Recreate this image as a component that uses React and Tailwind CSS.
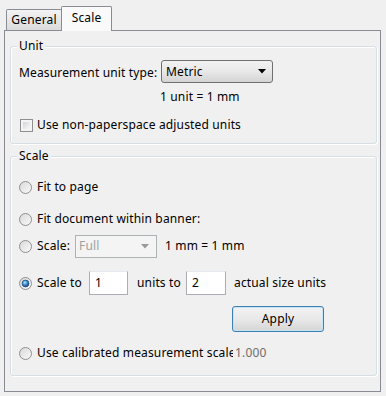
import React from 'react';

function Radio({ checked }) {
  return (
    <svg width="13" height="13" viewBox="0 0 13 13" className="shrink-0">
      <defs>
        <linearGradient id="rg" x1="0" y1="0" x2="1" y2="1">
          <stop offset="0" stopColor="#d8d8d8" />
          <stop offset="1" stopColor="#fbfbfb" />
        </linearGradient>
        <radialGradient id="rd" cx="0.4" cy="0.35" r="0.7">
          <stop offset="0" stopColor="#b9e4fb" />
          <stop offset="0.5" stopColor="#3a8fd0" />
          <stop offset="1" stopColor="#0d3a6b" />
        </radialGradient>
      </defs>
      <circle cx="6.5" cy="6.5" r="6" fill="url(#rg)" stroke="#8f8f8f" strokeWidth="1" />
      {checked && <circle cx="6.5" cy="6.5" r="3.4" fill="url(#rd)" stroke="#1d4f7f" strokeWidth="0.8" />}
    </svg>
  );
}

function Checkbox() {
  return (
    <div className="w-[13px] h-[13px] shrink-0 border border-[#8f8f8f] bg-[#f4f4f4] p-[2px]">
      <div className="w-full h-full bg-gradient-to-br from-[#d3d6da] to-[#f8f8f8]" />
    </div>
  );
}

function Arrow({ color }) {
  return (
    <svg width="8" height="5" viewBox="0 0 8 5">
      <path d="M0 0 L8 0 L4 4.5 Z" fill={color} />
    </svg>
  );
}

export default function App() {
  return (
    <div className="w-[386px] h-[396px] bg-[#f0f0f0] overflow-hidden text-[12px] leading-[16px] tracking-[0.15px] text-black font-['Noto_Sans',sans-serif]">
      <div className="h-[30px] flex items-end pl-[6px]">
        <div className="w-[56px] h-[21px] flex items-center justify-center border border-b-0 border-[#898c95] rounded-t-[2px] bg-gradient-to-b from-[#f3f3f3] to-[#dbdbdb]">
          General
        </div>
        <div className="relative z-10 ml-[-1px] mb-[-1px] w-[51px] h-[25px] flex items-start justify-center pt-[3px] border border-b-0 border-[#898c95] rounded-t-[2px] bg-[#fafafa]">
          Scale
        </div>
      </div>

      <div className="ml-[4px] w-[377px] h-[362px] border border-[#898c95] bg-[#f0f0f0] pl-[5px] pt-[15px]">
        {/* Unit group */}
        <div className="relative w-[367px] h-[98px] rounded-[3px] border border-[#d5dfe5] shadow-[inset_1px_1px_0_#fff,1px_1px_0_#fff]">
          <span className="absolute left-[6px] top-[-9px] px-[2px] bg-[#f0f0f0]">Unit</span>
          <div className="mt-[13px] flex items-center h-[23px] pl-[8px]">
            <span className="w-[142px] pt-[3px]">Measurement unit type:</span>
            <div className="w-[112px] h-[23px] flex items-center justify-between pl-[4px] pr-[6px] rounded-[3px] border border-[#707070] bg-gradient-to-b from-[#f2f2f2] via-[#e8e8e8] to-[#d4d4d4]">
              <span>Metric</span>
              <Arrow color="#000" />
            </div>
          </div>
          <div className="mt-[6px] pl-[149px] h-[16px]">1 unit = 1 mm</div>
          <div className="mt-[12px] flex items-center gap-[4px] h-[16px] pl-[9px]">
            <Checkbox />
            <span>Use non-paperspace adjusted units</span>
          </div>
        </div>

        {/* Scale group */}
        <div className="relative mt-[12px] w-[367px] h-[220px] rounded-[3px] border border-[#d5dfe5] shadow-[inset_1px_1px_0_#fff,1px_1px_0_#fff]">
          <span className="absolute left-[6px] top-[-9px] px-[2px] bg-[#f0f0f0]">Scale</span>

          <div className="mt-[22px] flex items-center gap-[5px] h-[16px] pl-[8px]">
            <Radio />
            <span>Fit to page</span>
          </div>
          <div className="mt-[16px] flex items-center gap-[5px] h-[16px] pl-[8px]">
            <Radio />
            <span>Fit document within banner:</span>
          </div>
          <div className="mt-[7px] flex items-center h-[24px] pl-[8px]">
            <Radio />
            <span className="ml-[5px] w-[38px]">Scale:</span>
            <div className="w-[82px] h-[23px] flex items-center justify-between pl-[3px] pr-[7px] border border-[#adb2b5] bg-[#f4f4f4] text-[#a0a0a0]">
              <span>Full</span>
              <Arrow color="#9a9a9a" />
            </div>
            <span className="ml-[8px]">1 mm = 1 mm</span>
          </div>
          <div className="mt-[13px] flex items-center h-[24px] pl-[8px]">
            <Radio checked />
            <span className="ml-[5px] w-[52px]">Scale to</span>
            <div className="w-[39px] h-[24px] flex items-center pl-[5px] bg-white border border-[#abadb3] border-t-[#e3e9ef]">1</div>
            <span className="ml-[9px] w-[49px]">units to</span>
            <div className="w-[40px] h-[24px] flex items-center pl-[5px] bg-white border border-[#abadb3] border-t-[#e3e9ef]">2</div>
            <span className="ml-[8px]">actual size units</span>
          </div>
          <div className="mt-[11px] pl-[221px]">
            <div className="w-[92px] h-[26px] flex items-center justify-center rounded-[3px] border border-[#3c7fb1] bg-gradient-to-b from-[#f2f2f2] via-[#e9e9e9] to-[#d5d5d5] shadow-[inset_0_0_0_1px_#c4e5f6]">
              Apply
            </div>
          </div>
          <div className="mt-[13px] flex items-center h-[16px] pl-[8px]">
            <Radio />
            <span className="ml-[5px] w-[196px] overflow-hidden whitespace-nowrap">Use calibrated measurement scale</span>
            <span className="ml-[2px] text-[#6d6d6d]">1.000</span>
          </div>
        </div>
      </div>
    </div>
  );
}
